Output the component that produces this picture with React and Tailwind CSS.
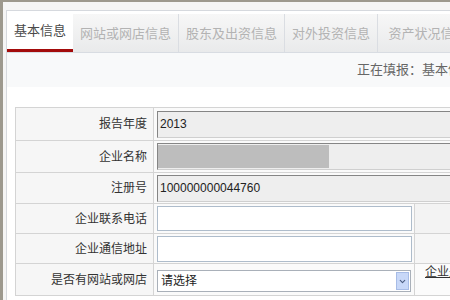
import { ChevronDown } from 'lucide-react'

const tabs = [
  { label: '网站或网店信息', w: 'w-[106px]' },
  { label: '股东及出资信息', w: 'w-[106px]' },
  { label: '对外投资信息', w: 'w-[93px]' },
  { label: '资产状况信息', w: 'w-[100px]' },
]

const font = { fontFamily: '"Liberation Sans", "Noto Sans CJK SC", sans-serif' }

function ReadOnlyBox({ children }) {
  return (
    <div className="flex h-[27px] w-[420px] shrink-0 items-center border border-[#cfcfcf] border-l-[#858585] border-t-[#858585] bg-[#eeeeee] pl-[2px] text-[12px] text-[#222]">
      {children}
    </div>
  )
}

function Label({ children }) {
  return (
    <div className="flex items-center justify-end bg-[#f6f6f6] pr-[6px] text-[12px] text-[#333]">
      {children}
    </div>
  )
}

export default function App() {
  return (
    <div
      className="h-[300px] w-[450px] overflow-hidden border-l-[3px] border-t-2 border-[#9d998e] bg-[#f5f5f5] pl-[3px] pt-[8px]"
      style={font}
    >
      <div className="h-full border-l border-t border-[#d6d9de] bg-white">
        {/* tabs */}
        <div className="flex h-[42px] items-end border-b border-[#d8dce2] whitespace-nowrap">
          <div className="flex h-full w-[66px] shrink-0 items-center justify-center border-b-[3px] border-[#a30b0b] bg-white pt-[2px] text-[13px] text-[#4a4a4a]">
            基本信息
          </div>
          {tabs.map(({ label, w }) => (
            <div
              key={label}
              className={`flex h-[38px] ${w} shrink-0 items-center justify-center border-r border-[#dadde2] bg-gradient-to-b from-[#f7f7f7] to-[#e9eaeb] pt-[1px] text-[13px] text-[#b3b3b3]`}
            >
              {label}
            </div>
          ))}
        </div>

        {/* info bar */}
        <div className="flex h-[34px] items-center bg-[#f8f9fa] pl-[350px] whitespace-nowrap text-[13px] text-[#666]">
          正在填报：基本信息
        </div>

        {/* form */}
        <div className="ml-[8px] mt-[20px] w-[700px] border border-[#d4d4d4]">
          <div className="grid grid-cols-[137px_260px_1fr] grid-rows-[32px_31px_30px_29px_29px_31px] gap-px bg-[#d4d4d4]">
            <Label>报告年度</Label>
            <div className="col-span-2 flex items-center bg-[#fafafa] pl-[3px]">
              <ReadOnlyBox>2013</ReadOnlyBox>
            </div>

            <Label>企业名称</Label>
            <div className="col-span-2 flex items-center bg-[#fafafa] pl-[3px]">
              <div className="flex h-[27px] w-[420px] shrink-0 items-center border border-[#cfcfcf] border-l-[#858585] border-t-[#858585] bg-[#eeeeee]">
                <div className="h-[23px] w-[171px] bg-[#bdbdbd]" />
              </div>
            </div>

            <Label>注册号</Label>
            <div className="col-span-2 flex items-center bg-[#fafafa] pl-[3px]">
              <ReadOnlyBox>100000000044760</ReadOnlyBox>
            </div>

            <Label>企业联系电话</Label>
            <div className="flex items-center bg-[#fafafa] pl-[3px]">
              <div className="h-[25px] w-[255px] border border-[#aebccb] bg-white" />
            </div>
            <div className="bg-[#f3f3f3]" />

            <Label>企业通信地址</Label>
            <div className="flex items-center bg-[#fafafa] pl-[3px]">
              <div className="h-[26px] w-[255px] border border-[#aebccb] bg-white" />
            </div>
            <div className="bg-[#f6f6f6]" />

            <Label>是否有网站或网店</Label>
            <div className="flex items-center bg-[#fafafa] pl-[3px] pt-[3px]">
              <div className="flex h-[22px] w-[254px] items-center justify-between border border-[#a9b0b9] bg-white pl-[3px] pr-[1px] text-[12px] text-[#222]">
                <span>请选择</span>
                <span className="flex h-[18px] w-[13px] items-center justify-center border border-[#a7bce6] bg-[#c8d8f8] text-[#4b5d80]">
                  <ChevronDown size={9} strokeWidth={3} />
                </span>
              </div>
            </div>
            <div className="flex items-start bg-[#fbfbfb] pl-[10px] pt-[1px] whitespace-nowrap">
              <span className="text-[12px] leading-[14px] text-[#333] underline">企业是否有投资信息</span>
            </div>
          </div>
        </div>
      </div>
    </div>
  )
}
